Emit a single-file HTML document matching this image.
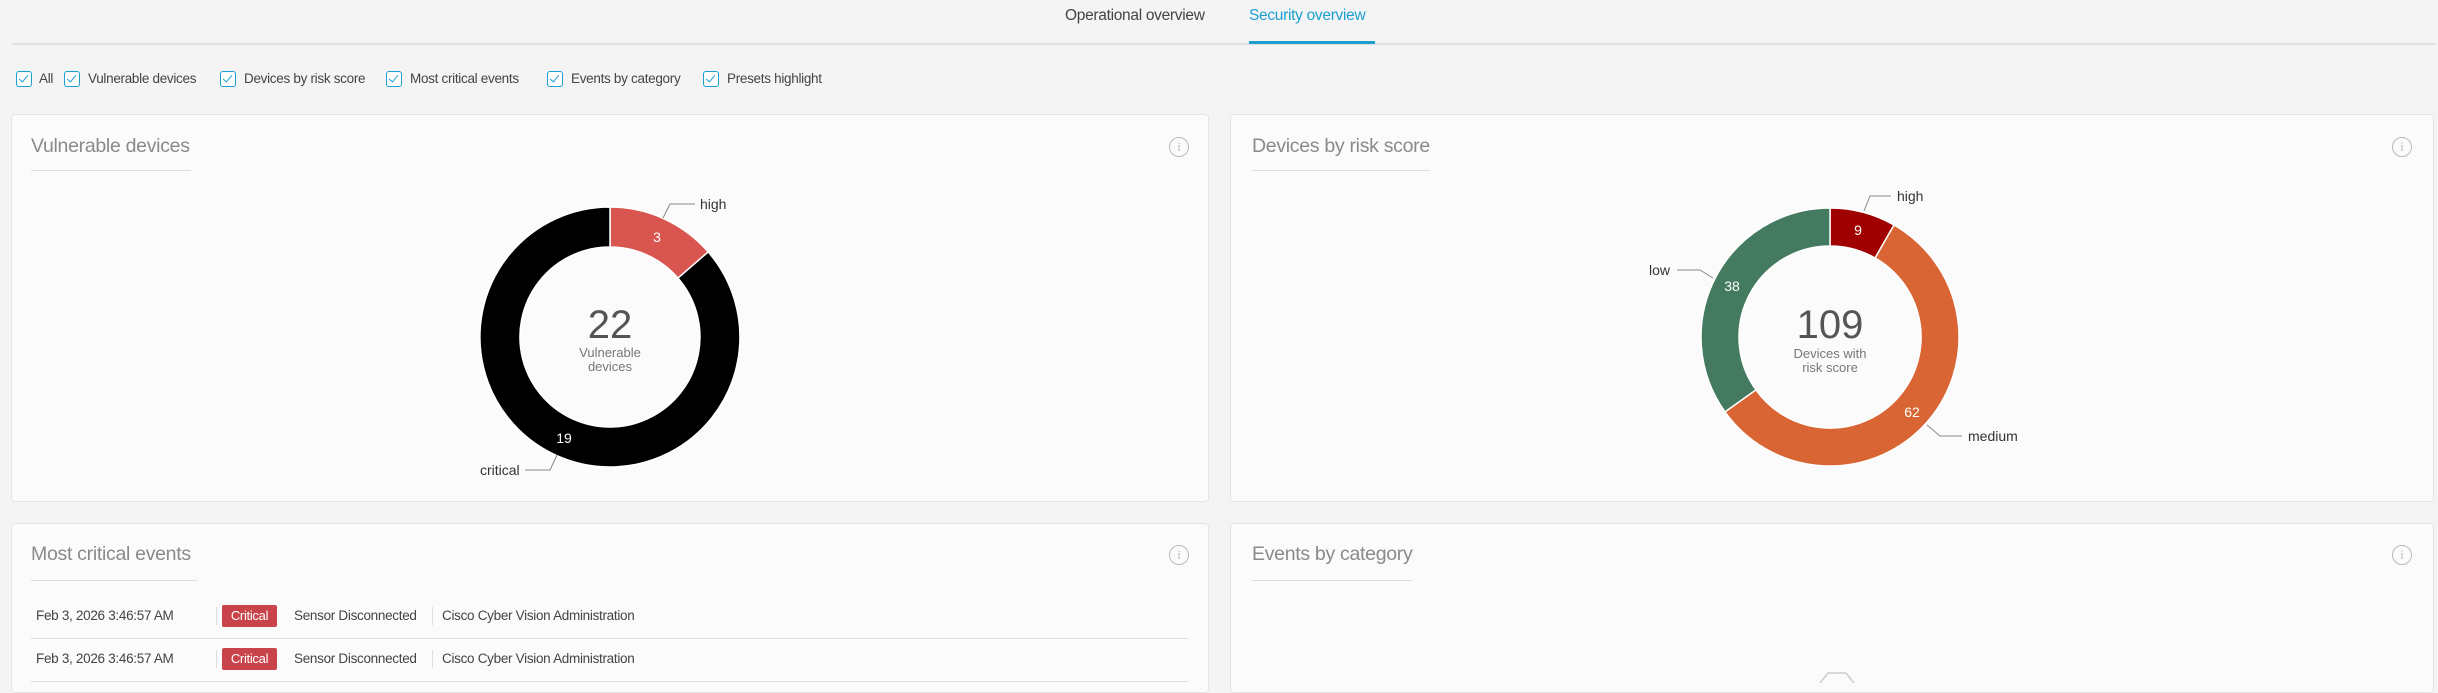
<!DOCTYPE html>
<html><head><meta charset="utf-8"><style>
*{margin:0;padding:0;box-sizing:border-box}
body{width:2438px;height:683px;overflow:hidden;background:#f4f4f4;font-family:"Liberation Sans",sans-serif;position:relative;color:#444}
.abs{position:absolute;white-space:nowrap}
.tab{font-size:15.5px;top:7px;color:#444;letter-spacing:-0.3px}
.cb{position:absolute;top:71px;width:16px;height:16px;border:1.5px solid #1a9fd0;border-radius:3px;background:#fff}
.cb:after{content:"";position:absolute;left:4px;top:1px;width:4px;height:8px;border:solid #1a9fd0;border-width:0 1.5px 1.5px 0;transform:rotate(40deg)}
.cl{position:absolute;top:71px;font-size:13.5px;color:#444;letter-spacing:-0.3px}
.card{position:absolute;background:#fbfbfb;border:1px solid #e4e4e4;border-radius:4px}
.ttl{position:absolute;font-size:19.5px;color:#8a8a8a;font-weight:300;letter-spacing:-0.3px}
.ul{position:absolute;height:1px;background:#ddd}
.info{position:absolute;width:20px;height:20px;border:1.5px solid #bbb;border-radius:50%;color:#bbb;font-size:13px;text-align:center;line-height:17px;font-family:"Liberation Serif",serif}
.row{position:absolute;font-size:13.5px;color:#444;letter-spacing:-0.3px}
.badge{position:absolute;background:#c8444a;color:#fff;font-size:13px;border-radius:2px;text-align:center;line-height:22px;width:55px;height:22px;letter-spacing:-0.3px}
.sep{position:absolute;width:1px;height:18px;background:#ddd}
</style></head><body>
<div class="abs tab" style="left:1065px">Operational overview</div>
<div class="abs tab" style="left:1249px;color:#1a9fd0">Security overview</div>
<div class="abs" style="left:12px;top:43px;width:2424px;height:2px;background:#e2e2e2"></div>
<div class="abs" style="left:1249px;top:41px;width:126px;height:3px;background:#1a9fd0"></div>

<div class="cb" style="left:16px"></div><div class="cl" style="left:39px">All</div>
<div class="cb" style="left:64px"></div><div class="cl" style="left:88px">Vulnerable devices</div>
<div class="cb" style="left:220px"></div><div class="cl" style="left:244px">Devices by risk score</div>
<div class="cb" style="left:386px"></div><div class="cl" style="left:410px">Most critical events</div>
<div class="cb" style="left:547px"></div><div class="cl" style="left:571px">Events by category</div>
<div class="cb" style="left:703px"></div><div class="cl" style="left:727px">Presets highlight</div>

<div class="card" style="left:11px;top:114px;width:1198px;height:388px"></div>
<div class="card" style="left:1230px;top:114px;width:1204px;height:388px"></div>
<div class="card" style="left:11px;top:523px;width:1198px;height:170px"></div>
<div class="card" style="left:1230px;top:523px;width:1204px;height:170px"></div>

<div class="ttl" style="left:31px;top:135px">Vulnerable devices</div>
<div class="ul" style="left:31px;top:170px;width:160px"></div>
<div class="info" style="left:1169px;top:137px">i</div>
<div class="ttl" style="left:1252px;top:135px">Devices by risk score</div>
<div class="ul" style="left:1252px;top:170px;width:178px"></div>
<div class="info" style="left:2392px;top:137px">i</div>
<div class="ttl" style="left:31px;top:543px">Most critical events</div>
<div class="ul" style="left:31px;top:580px;width:166px"></div>
<div class="info" style="left:1169px;top:545px">i</div>
<div class="ttl" style="left:1252px;top:543px">Events by category</div>
<div class="ul" style="left:1252px;top:580px;width:160px"></div>
<div class="info" style="left:2392px;top:545px">i</div>

<div class="row" style="left:36px;top:608px">Feb 3, 2026 3:46:57 AM</div>
<div class="sep" style="left:216px;top:607px"></div>
<div class="badge" style="left:222px;top:605px">Critical</div>
<div class="row" style="left:294px;top:608px">Sensor Disconnected</div>
<div class="sep" style="left:432px;top:607px"></div>
<div class="row" style="left:442px;top:608px">Cisco Cyber Vision Administration</div>
<div class="ul" style="left:31px;top:638px;width:1157px"></div>
<div class="row" style="left:36px;top:651px">Feb 3, 2026 3:46:57 AM</div>
<div class="sep" style="left:216px;top:650px"></div>
<div class="badge" style="left:222px;top:648px">Critical</div>
<div class="row" style="left:294px;top:651px">Sensor Disconnected</div>
<div class="sep" style="left:432px;top:650px"></div>
<div class="row" style="left:442px;top:651px">Cisco Cyber Vision Administration</div>
<div class="ul" style="left:31px;top:681px;width:1157px"></div>

<svg class="abs" style="left:0;top:0" width="2438" height="683" font-family="Liberation Sans, sans-serif">
<g stroke="#fff" stroke-width="1.5">
<path d="M610,207 A130,130 0 0 1 708.2,251.9 L678,278.1 A90,90 0 0 0 610,247 Z" fill="#d95550"/>
<path d="M708.2,251.9 A130,130 0 1 1 610,207 L610,247 A90,90 0 1 0 678,278.1 Z" fill="#000"/>
<path d="M1830,208 A129,129 0 0 1 1894,225 L1875.1,258 A91,91 0 0 0 1830,246 Z" fill="#a00000"/>
<path d="M1894,225 A129,129 0 1 1 1725,411.9 L1755.9,389.8 A91,91 0 1 0 1875.1,258 Z" fill="#d96534"/>
<path d="M1725,411.9 A129,129 0 0 1 1830,208 L1830,246 A91,91 0 0 0 1755.9,389.8 Z" fill="#447a60"/>
</g>
<g fill="none" stroke="#888" stroke-width="1">
<path d="M663,218 L670,204 L695,204"/>
<path d="M557,455 L550,470 L525,470"/>
<path d="M1864,211 L1870,196 L1891,196"/>
<path d="M1713,278 L1700,270 L1677,270"/>
<path d="M1927,425 L1940,436 L1962,436"/>
</g>
<g font-size="14" fill="#333">
<text x="700" y="209">high</text>
<text x="480" y="475">critical</text>
<text x="1897" y="201">high</text>
<text x="1649" y="275">low</text>
<text x="1968" y="441">medium</text>
</g>
<g font-size="14" fill="#fff" text-anchor="middle">
<text x="657" y="242">3</text>
<text x="564" y="443">19</text>
<text x="1858" y="235">9</text>
<text x="1732" y="291">38</text>
<text x="1912" y="417">62</text>
</g>
<g text-anchor="middle">
<text x="610" y="338" font-size="40" fill="#555">22</text>
<text x="610" y="357" font-size="13" fill="#777">Vulnerable</text>
<text x="610" y="371" font-size="13" fill="#777">devices</text>
<text x="1830" y="338" font-size="40" fill="#555">109</text>
<text x="1830" y="358" font-size="13" fill="#777">Devices with</text>
<text x="1830" y="372" font-size="13" fill="#777">risk score</text>
</g>
<path d="M1820,683 L1828,673 L1846,673 L1854,683" fill="none" stroke="#ccc" stroke-width="1.5"/>
</svg>
</body></html>
